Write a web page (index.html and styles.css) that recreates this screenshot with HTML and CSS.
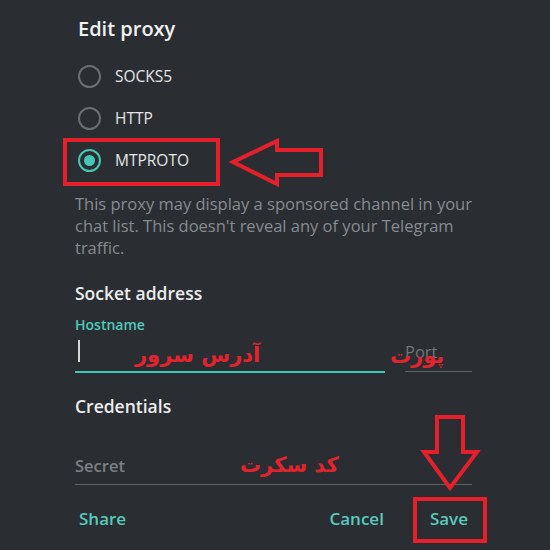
FILE: index.html
```html
<!DOCTYPE html>
<html lang="en">
<head>
<meta charset="utf-8">
<title>Edit proxy</title>
<link rel="stylesheet" href="styles.css">
</head>
<body>
<div class="dialog">
  <h1 class="title">Edit proxy</h1>
  <div class="radios">
    <div class="radio"><span class="dot"></span><span class="label">SOCKS5</span></div>
    <div class="radio"><span class="dot"></span><span class="label">HTTP</span></div>
    <div class="radio checked"><span class="dot"></span><span class="label">MTPROTO</span></div>
  </div>
  <p class="desc">This proxy may display a sponsored channel in your chat list. This doesn't reveal any of your Telegram traffic.</p>
  <h2 class="section">Socket address</h2>
  <div class="float-label">Hostname</div>
  <div class="row">
    <div class="field host active"><span class="cursor"></span></div>
    <div class="field port"><span class="ph">Port</span></div>
  </div>
  <h2 class="section cred">Credentials</h2>
  <div class="field secret"><span class="ph">Secret</span></div>
  <div class="buttons">
    <span class="btn">Share</span>
    <div class="right">
      <span class="btn">Cancel</span>
      <span class="btn">Save</span>
    </div>
  </div>
</div>

<span class="note note-host" dir="rtl">آدرس سرور</span>
<span class="note note-port" dir="rtl">پورت</span>
<span class="note note-secret" dir="rtl">کد سکرت</span>

<svg class="marks" width="550" height="550" viewBox="0 0 550 550">
  <g fill="none" stroke="#e5202b" stroke-width="4" stroke-linejoin="miter">
    <rect x="65" y="140" width="153" height="44"/>
    <polygon points="233,162 277,141 277,150 321,150 321,175 277,175 277,184"/>
    <rect x="415" y="499" width="70" height="42"/>
    <polygon points="437,417 463,417 463,452 477,452 450,488 424,452 437,452"/>
  </g>
</svg>
</body>
</html>
```

FILE: styles.css
```css
html, body {
  margin: 0;
  padding: 0;
  background: #2a2e33;
  width: 550px;
  height: 550px;
  overflow: hidden;
}

body {
  font-family: "Open Sans", "Noto Sans", sans-serif;
  color: #e8e8e8;
  position: relative;
}

.dialog {
  display: flex;
  flex-direction: column;
  width: 397px;
  padding: 15px 0 0 75px;
}

.title {
  margin: 0 0 0 3px;
  font-size: 20px;
  font-weight: 600;
  line-height: 28px;
  color: #f0f0f0;
}

.radios {
  margin-top: 12px;
  display: flex;
  flex-direction: column;
}

.radio {
  display: flex;
  align-items: center;
  height: 42px;
  padding-left: 3px;
}

.dot {
  box-sizing: border-box;
  width: 23px;
  height: 23px;
  border-radius: 50%;
  border: 2px solid #6a6e73;
  display: flex;
  align-items: center;
  justify-content: center;
}

.checked .dot {
  border: 2.5px solid #45c7b4;
}

.checked .dot::after {
  content: "";
  width: 11px;
  height: 11px;
  border-radius: 50%;
  background: #45c7b4;
}

.label {
  margin-left: 14px;
  font-size: 15.5px;
  color: #e6e6e6;
}

.desc {
  margin: 12px 0 0;
  font-size: 16.5px;
  line-height: 22px;
  color: #868b90;
}

.section {
  margin: 22px 0 0;
  font-size: 17.5px;
  font-weight: 600;
  line-height: 24px;
  color: #ececec;
}

.float-label {
  margin-top: 10px;
  font-size: 14px;
  font-weight: 600;
  line-height: 20px;
  color: #4fc9b8;
}

.row {
  display: flex;
  gap: 20px;
}

.field {
  box-sizing: border-box;
  height: 37px;
  padding: 4px 0 8px;
  border-bottom: 1px solid #5e6267;
  display: flex;
  align-items: center;
  font-size: 16px;
}

.host {
  width: 310px;
  height: 38px;
  border-bottom: 2px solid #3fc9b8;
}

.port {
  width: 67px;
}

.cursor {
  width: 1.5px;
  height: 22px;
  margin-left: 3px;
  background: #d8d8d8;
}

.ph {
  color: #7b8085;
  font-size: 16.5px;
  font-weight: 600;
}

.port .ph {
  font-weight: 400;
  color: #6f7479;
}

.cred {
  margin-top: 21px;
}

.secret {
  margin-top: 28px;
  height: 39px;
  padding: 6px 0 6px;
}

.buttons {
  margin-top: 22px;
  display: flex;
  justify-content: space-between;
  align-items: center;
}

.right {
  display: flex;
  gap: 38px;
}

.btn {
  font-size: 17px;
  font-weight: 600;
  line-height: 24px;
  color: #58cbbd;
  padding: 0 4px;
}

.note {
  position: absolute;
  font-family: "DejaVu Sans", sans-serif;
  font-weight: bold;
  color: #e3242d;
  font-size: 21px;
  line-height: 26px;
  white-space: nowrap;
}

.note-host { left: 135px; top: 342px; }
.note-port { left: 390px; top: 343px; }
.note-secret { left: 240px; top: 452px; }

.marks {
  position: absolute;
  left: 0;
  top: 0;
  pointer-events: none;
}
```
